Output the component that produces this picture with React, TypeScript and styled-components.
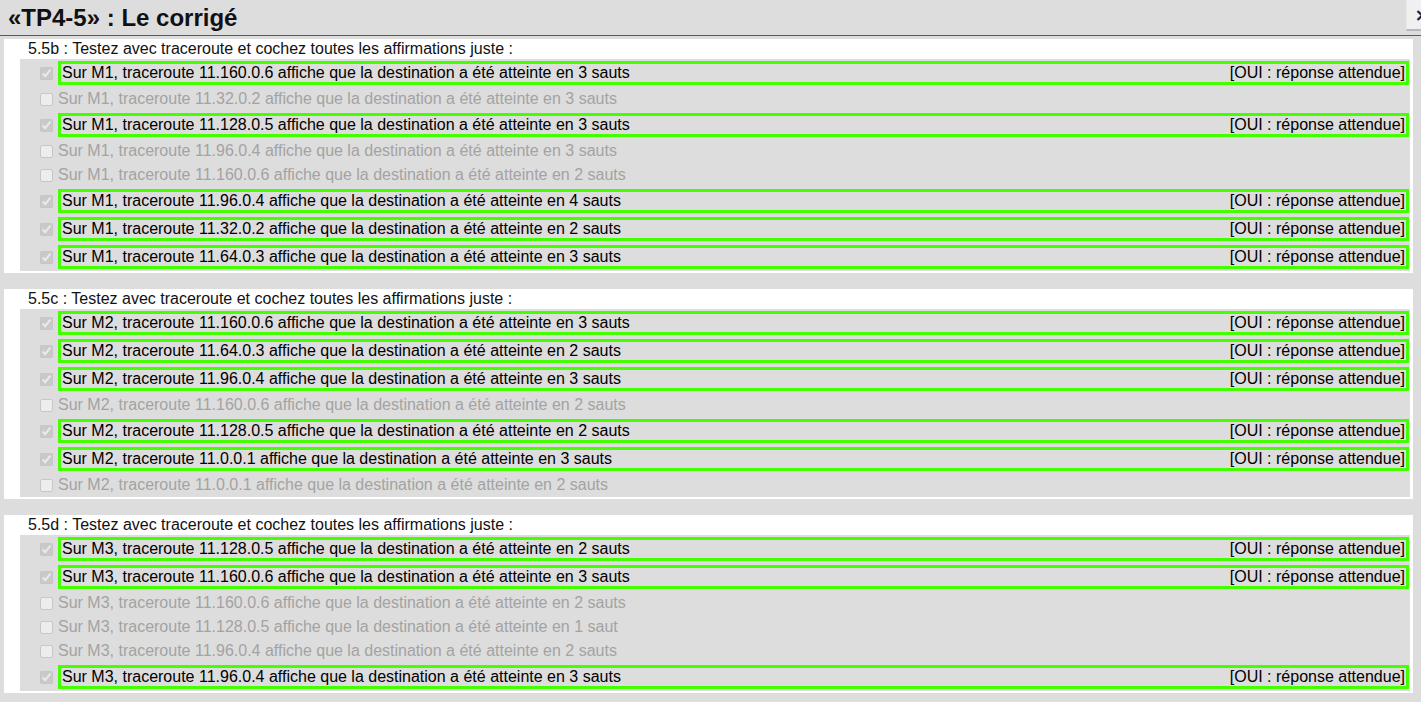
import React from "react";
import styled, { createGlobalStyle } from "styled-components";

const GlobalStyle = createGlobalStyle`
  html, body {
    margin: 0;
    padding: 0;
    background: #dddddd;
    font-family: "Liberation Sans", Arial, sans-serif;
    overflow: hidden;
  }
`;

const Page = styled.div`
  position: relative;
  width: 1421px;
  min-height: 702px;
  background: #dddddd;
`;

const Header = styled.header`
  height: 35px;
  border-bottom: 1px solid #5a5a5a;
  background: #dddddd;
  display: flex;
  align-items: center;
`;

const Title = styled.h1`
  margin: 0;
  padding-left: 8px;
  font-size: 24px;
  font-weight: bold;
  color: #111;
  line-height: 34px;
`;

const CloseButton = styled.button`
  position: absolute;
  top: 0;
  right: -16px;
  width: 31px;
  height: 31px;
  padding: 0;
  border: none;
  border-bottom: 2px solid #b8b8b8;
  border-left: 1px solid #e8e8e8;
  background: #f0f0f0;
  font-family: "DejaVu Sans", sans-serif;
  font-size: 18px;
  font-weight: bold;
  color: #222;
  line-height: 29px;
  text-align: center;
`;

const Main = styled.main`
  display: flex;
  flex-direction: column;
  gap: 16px;
  padding: 3px 8px 0 4px;
`;

const Section = styled.section`
  background: #ffffff;
  padding: 0 3px 2px 16px;
`;

const Question = styled.div`
  height: 20px;
  line-height: 20px;
  padding-left: 8px;
  font-size: 16px;
  color: #111;
`;

const List = styled.div`
  background: #dddddd;
  display: flex;
  flex-direction: column;
`;

const Row = styled.div<{ $ok: boolean }>`
  display: flex;
  align-items: center;
  height: ${(p) => (p.$ok ? 28 : 24)}px;
  font-size: 16px;
  color: ${(p) => (p.$ok ? "#000" : "#a3a3a3")};
`;

const Box = styled.input`
  width: 13px;
  height: 13px;
  margin: 0 5px 0 20px;
  flex: none;
`;

const Answer = styled.div`
  flex: 1;
  display: flex;
  justify-content: space-between;
  align-items: center;
  box-sizing: border-box;
  height: 24px;
  margin-right: 1px;
  padding: 0 1px 0 1px;
  border: 3px solid #44ff00;
`;

const Plain = styled.span`
  line-height: 24px;
`;

type Item = { text: string; ok: boolean };
type Q = { id: string; items: Item[] };

const mk = (m: string, ip: string, n: number, ok: boolean): Item => ({
  text: `Sur ${m}, traceroute ${ip} affiche que la destination a été atteinte en ${n} saut${n > 1 ? "s" : ""}`,
  ok,
});

const data: Q[] = [
  {
    id: "5.5b",
    items: [
      mk("M1", "11.160.0.6", 3, true),
      mk("M1", "11.32.0.2", 3, false),
      mk("M1", "11.128.0.5", 3, true),
      mk("M1", "11.96.0.4", 3, false),
      mk("M1", "11.160.0.6", 2, false),
      mk("M1", "11.96.0.4", 4, true),
      mk("M1", "11.32.0.2", 2, true),
      mk("M1", "11.64.0.3", 3, true),
    ],
  },
  {
    id: "5.5c",
    items: [
      mk("M2", "11.160.0.6", 3, true),
      mk("M2", "11.64.0.3", 2, true),
      mk("M2", "11.96.0.4", 3, true),
      mk("M2", "11.160.0.6", 2, false),
      mk("M2", "11.128.0.5", 2, true),
      mk("M2", "11.0.0.1", 3, true),
      mk("M2", "11.0.0.1", 2, false),
    ],
  },
  {
    id: "5.5d",
    items: [
      mk("M3", "11.128.0.5", 2, true),
      mk("M3", "11.160.0.6", 3, true),
      mk("M3", "11.160.0.6", 2, false),
      mk("M3", "11.128.0.5", 1, false),
      mk("M3", "11.96.0.4", 2, false),
      mk("M3", "11.96.0.4", 3, true),
    ],
  },
];

export default function App() {
  return (
    <Page>
      <GlobalStyle />
      <Header>
        <Title>«TP4-5» : Le corrigé</Title>
      </Header>
      <CloseButton aria-label="Fermer">×</CloseButton>
      <Main>
        {data.map((q) => (
          <Section key={q.id}>
            <Question>{q.id} : Testez avec traceroute et cochez toutes les affirmations juste :</Question>
            <List>
              {q.items.map((it, i) => (
                <Row key={i} $ok={it.ok}>
                  <Box type="checkbox" disabled checked={it.ok} readOnly />
                  {it.ok ? (
                    <Answer>
                      <span>{it.text}</span>
                      <span>[OUI : réponse attendue]</span>
                    </Answer>
                  ) : (
                    <Plain>{it.text}</Plain>
                  )}
                </Row>
              ))}
            </List>
          </Section>
        ))}
      </Main>
    </Page>
  );
}
